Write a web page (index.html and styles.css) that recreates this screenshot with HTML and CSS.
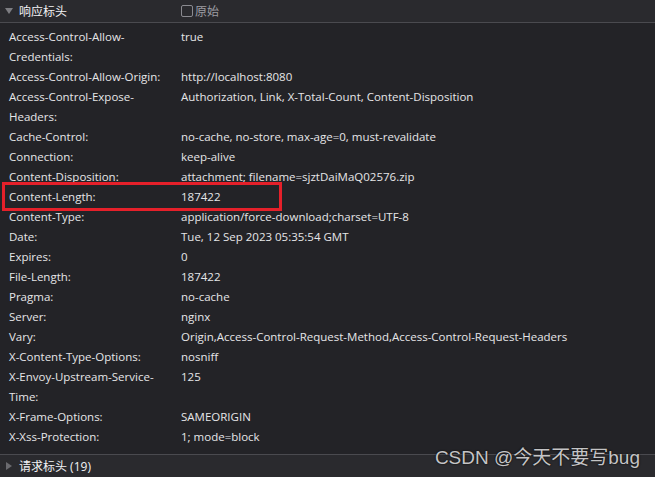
FILE: index.html
```html
<!DOCTYPE html>
<html lang="zh-CN">
<head>
  <meta charset="UTF-8" />
  <title>响应标头</title>
  <link rel="stylesheet" href="styles.css">
</head>
<body>
  <div class="panel">
    <div class="head">
      <div class="head-title"><span class="tri down"></span>响应标头</div>
      <label class="raw"><span class="box"></span>原始</label>
    </div>
    <div class="rows">
      <div class="row"><div class="name">Access-Control-Allow-Credentials:</div><div class="val">true</div></div>
      <div class="row"><div class="name">Access-Control-Allow-Origin:</div><div class="val">http://localhost:8080</div></div>
      <div class="row"><div class="name">Access-Control-Expose-Headers:</div><div class="val">Authorization, Link, X-Total-Count, Content-Disposition</div></div>
      <div class="row"><div class="name">Cache-Control:</div><div class="val">no-cache, no-store, max-age=0, must-revalidate</div></div>
      <div class="row"><div class="name">Connection:</div><div class="val">keep-alive</div></div>
      <div class="row"><div class="name">Content-Disposition:</div><div class="val">attachment; filename=sjztDaiMaQ02576.zip</div></div>
      <div class="row mark"><div class="name">Content-Length:</div><div class="val">187422</div></div>
      <div class="row"><div class="name">Content-Type:</div><div class="val">application/force-download;charset=UTF-8</div></div>
      <div class="row"><div class="name">Date:</div><div class="val">Tue, 12 Sep 2023 05:35:54 GMT</div></div>
      <div class="row"><div class="name">Expires:</div><div class="val">0</div></div>
      <div class="row"><div class="name">File-Length:</div><div class="val">187422</div></div>
      <div class="row"><div class="name">Pragma:</div><div class="val">no-cache</div></div>
      <div class="row"><div class="name">Server:</div><div class="val">nginx</div></div>
      <div class="row"><div class="name">Vary:</div><div class="val">Origin,Access-Control-Request-Method,Access-Control-Request-Headers</div></div>
      <div class="row"><div class="name">X-Content-Type-Options:</div><div class="val">nosniff</div></div>
      <div class="row"><div class="name">X-Envoy-Upstream-Service-Time:</div><div class="val">125</div></div>
      <div class="row"><div class="name">X-Frame-Options:</div><div class="val">SAMEORIGIN</div></div>
      <div class="row"><div class="name">X-Xss-Protection:</div><div class="val">1; mode=block</div></div>
    </div>
    <div class="foot">
      <div class="head-title"><span class="tri right"></span>请求标头 (19)</div>
    </div>
  </div>
  <div class="watermark">CSDN @今天不要写bug</div>
</body>
</html>
```

FILE: styles.css
```css
body {
  margin: 0;
  background: #232327;
  font-family: "Open Sans", "Noto Sans CJK SC", sans-serif;
  font-size: 11.5px;
  color: #e6e6e8;
  height: 477px;
  overflow: hidden;
  position: relative;
}
.panel {
  display: flex;
  flex-direction: column;
}
.head {
  display: flex;
  align-items: center;
  height: 22px;
  background: #2a2a2e;
  border-bottom: 1px solid #4a4a4f;
}
.head-title {
  display: flex;
  align-items: center;
  width: 181px;
  font-size: 12px;
  color: #f2f2f4;
}
.tri {
  width: 0;
  height: 0;
  margin: 0 6px 0 5px;
}
.tri.down {
  border-left: 4px solid transparent;
  border-right: 4px solid transparent;
  border-top: 6px solid #7d7d82;
}
.tri.right {
  border-top: 4px solid transparent;
  border-bottom: 4px solid transparent;
  border-left: 6px solid #6a6a6f;
  margin-left: 6px;
  margin-right: 7px;
}
.raw {
  display: flex;
  align-items: center;
  font-size: 12px;
  color: #9c9ca2;
}
.box {
  width: 10px;
  height: 10px;
  border: 1px solid #8a8a90;
  border-radius: 2px;
  margin-right: 2px;
}
.rows {
  padding: 4px 0 7px;
}
.row {
  display: flex;
  line-height: 20px;
  position: relative;
}
.name {
  width: 158px;
  padding-left: 9px;
  margin-right: 14px;
  overflow-wrap: break-word;
}
.val {
  flex: 1;
  white-space: nowrap;
}
.mark::after {
  content: "";
  position: absolute;
  left: 2px;
  top: -5px;
  width: 274px;
  height: 23px;
  border: 3px solid #e5202a;
}
.foot {
  display: flex;
  align-items: center;
  height: 22px;
  background: #2a2a2e;
  border-top: 1px solid #4a4a4f;
}
.watermark {
  position: absolute;
  right: 15px;
  top: 442px;
  font-family: "Liberation Sans", "Noto Sans CJK SC", sans-serif;
  font-size: 19px;
  color: #c4c4c6;
  text-shadow: 0 0 2px #111, 0 0 1px #111;
}
```
